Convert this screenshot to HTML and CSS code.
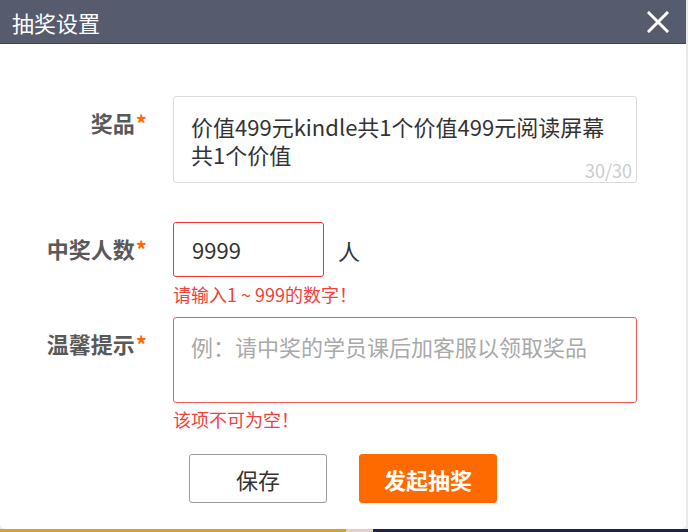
FILE: index.html
```html
<!DOCTYPE html>
<html lang="zh-CN">
<head>
<meta charset="utf-8">
<title>抽奖设置</title>
<link rel="stylesheet" href="styles.css">
</head>
<body>
<div class="dialog">
  <div class="dialog-head">
    <span class="dialog-title">抽奖设置</span>
    <span class="close">
      <svg width="22" height="22" viewBox="0 0 22 22"><path d="M2 2 L20 20 M20 2 L2 20" stroke="#fff" stroke-width="3" stroke-linecap="square" fill="none"/></svg>
    </span>
  </div>
  <div class="dialog-body">
    <div class="row row-prize">
      <label class="label">奖品<i>*</i></label>
      <div class="field">
        <div class="textarea prize"><div class="value">价值499元kindle共1个价值499元阅读屏幕<br>共1个价值</div><span class="counter">30/30</span></div>
      </div>
    </div>
    <div class="row row-count">
      <label class="label">中奖人数<i>*</i></label>
      <div class="field">
        <div class="inline">
          <div class="input error">9999</div>
          <span class="unit">人</span>
        </div>
        <div class="err-msg">请输入1 ~ 999的数字！</div>
      </div>
    </div>
    <div class="row row-tip">
      <label class="label">温馨提示<i>*</i></label>
      <div class="field">
        <div class="textarea tip error-soft"><span class="placeholder">例：请中奖的学员课后加客服以领取奖品</span></div>
        <div class="err-msg">该项不可为空！</div>
      </div>
    </div>
    <div class="actions">
      <button class="btn btn-plain">保存</button>
      <button class="btn btn-primary">发起抽奖</button>
    </div>
  </div>
</div>
</body>
</html>
```
FILE: styles.css
```css
html, body {
  margin: 0;
  padding: 0;
}
body {
  width: 688px;
  height: 532px;
  overflow: hidden;
  font-family: "Noto Sans CJK SC", "Noto Sans", sans-serif;
  background:
    linear-gradient(to right, #d6a22a 0 346px, #e6cfc2 346px 373px, #1d2250 373px) left bottom / 100% 3px no-repeat,
    #e9e9ea;
}
.dialog {
  width: 686px;
  height: 529px;
  background: #fff;
  border-radius: 0 0 5px 5px;
  overflow: hidden;
  box-sizing: border-box;
}
.dialog-head {
  height: 43px;
  border-bottom: 1px solid #3e4356;
  background: #565b6d;
  display: flex;
  align-items: center;
  justify-content: space-between;
  padding: 0 17px 0 12px;
}
.dialog-title {
  color: #fff;
  font-size: 22px;
  line-height: 44px;
}
.close {
  display: flex;
  width: 22px;
  height: 22px;
}
.dialog-body {
  padding-top: 52px;
}
.row {
  display: grid;
  grid-template-columns: 147px 464px;
  column-gap: 26px;
}
.label {
  text-align: right;
  font-size: 22px;
  font-weight: bold;
  color: #595959;
  line-height: 28px;
  padding-top: 12px;
}
.label i {
  font-style: normal;
  color: #ff6a00;
  margin-left: 1px;
}
.textarea {
  position: relative;
  box-sizing: border-box;
  border: 1px solid #dcdcdc;
  border-radius: 3px;
  padding: 15px 20px 0 17px;
  font-size: 22px;
  line-height: 28px;
  color: #333;
}
.prize {
  height: 87px;
}
.counter {
  position: absolute;
  right: 4px;
  bottom: 4px;
  font-size: 18px;
  line-height: 16px;
  color: #cbcbcb;
}
.row-count {
  margin-top: 39px;
}
.inline {
  display: flex;
  align-items: center;
}
.input {
  box-sizing: border-box;
  width: 151px;
  height: 55px;
  border-radius: 3px;
  padding-left: 18px;
  font-size: 22px;
  line-height: 53px;
  color: #333;
}
.error {
  border: 1px solid #f5312c;
}
.unit {
  margin-left: 14px;
  font-size: 22px;
  color: #333;
}
.err-msg {
  color: #f5403a;
  font-size: 18px;
  line-height: 24px;
  margin-top: 5px;
}
.row-tip {
  margin-top: 11px;
}
.tip {
  height: 86px;
  padding-top: 14px;
}
.error-soft {
  border-color: #f45a55;
}
.placeholder {
  color: #a9a9a9;
}
.row-tip .err-msg {
  margin-top: 4px;
}
.actions {
  display: flex;
  justify-content: center;
  gap: 32px;
  margin-top: 23px;
}
.btn {
  width: 138px;
  height: 49px;
  border-radius: 3px;
  font-family: "Noto Sans CJK SC", sans-serif;
  font-size: 22px;
  cursor: pointer;
  padding: 0;
}
.btn-plain {
  background: #fff;
  border: 1px solid #9b9b9b;
  color: #333;
}
.btn-primary {
  background: #ff6a00;
  border: 1px solid #ff6a00;
  color: #fff;
  font-weight: bold;
}
```
